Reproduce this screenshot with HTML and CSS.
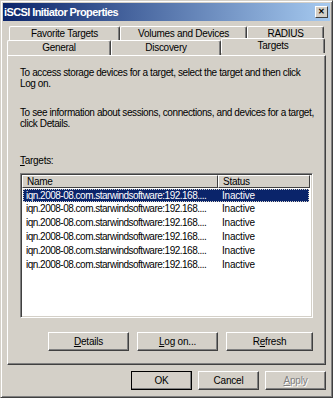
FILE: index.html
```html
<!DOCTYPE html>
<html lang="en">
<head>
  <meta charset="UTF-8">
  <title>iSCSI Initiator Properties</title>
  <link rel="stylesheet" href="styles.css">
</head>
<body>
<div class="window">
  <div class="titlebar">
    <span class="title">iSCSI Initiator Properties</span>
    <span class="close">&#x2715;</span>
  </div>

  <div class="tab-row back">
    <div class="tab" style="width: 111px;">Favorite Targets</div>
    <div class="tab" style="width: 127px;">Volumes and Devices</div>
    <div class="tab" style="width: 77px;">RADIUS</div>
  </div>
  <div class="tab-row front">
    <div class="tab" style="width: 104px;">General</div>
    <div class="tab" style="width: 110px;">Discovery</div>
    <div class="tab active" style="width: 104px;">Targets</div>
  </div>

  <div class="panel">
    <p>To access storage devices for a target, select the target and then click<br>Log on.</p>
    <p>To see information about sessions, connections, and devices for a target,<br>click Details.</p>

    <div class="list-label"><u>T</u>argets:</div>
    <div class="listview">
      <div class="list-head">
        <div class="col-name">Name</div>
        <div class="col-status">Status</div>
      </div>
      <div class="list-row selected">
        <div class="col-name">iqn.2008-08.com.starwindsoftware:192.168....</div>
        <div class="col-status">Inactive</div>
      </div>
      <div class="list-row">
        <div class="col-name">iqn.2008-08.com.starwindsoftware:192.168....</div>
        <div class="col-status">Inactive</div>
      </div>
      <div class="list-row">
        <div class="col-name">iqn.2008-08.com.starwindsoftware:192.168....</div>
        <div class="col-status">Inactive</div>
      </div>
      <div class="list-row">
        <div class="col-name">iqn.2008-08.com.starwindsoftware:192.168....</div>
        <div class="col-status">Inactive</div>
      </div>
      <div class="list-row">
        <div class="col-name">iqn.2008-08.com.starwindsoftware:192.168....</div>
        <div class="col-status">Inactive</div>
      </div>
      <div class="list-row">
        <div class="col-name">iqn.2008-08.com.starwindsoftware:192.168....</div>
        <div class="col-status">Inactive</div>
      </div>
    </div>

    <div class="panel-buttons">
      <button class="btn" style="width: 81px;"><u>D</u>etails</button>
      <button class="btn" style="width: 81px;"><u>L</u>og on...</button>
      <button class="btn" style="width: 87px;">R<u>e</u>fresh</button>
    </div>
  </div>

  <div class="dialog-buttons">
    <button class="btn default">OK</button>
    <button class="btn">Cancel</button>
    <button class="btn disabled"><u>A</u>pply</button>
  </div>
</div>
</body>
</html>
```

FILE: styles.css
```css
body {
    margin: 0;
    font-family: "Liberation Sans", Arial, sans-serif;
    font-size: 10px;
    letter-spacing: -0.28px;
    color: #000;
}
.window {
    width: 333px;
    height: 398px;
    box-sizing: border-box;
    background: #d4d0c8;
    border: 1px solid #404040;
    border-top-color: #d4d0c8;
    border-left-color: #d4d0c8;
    box-shadow: inset 1px 1px 0 #fff, inset -1px -1px 0 #808080;
    padding: 2px;
}
.titlebar {
    height: 18px;
    background: linear-gradient(to right, #0a246a, #a6caf0);
    display: flex;
    align-items: center;
    justify-content: space-between;
    padding: 0 2px 0 1px;
}
.title {
    color: #fff;
    font-weight: bold;
    font-size: 11px;
    letter-spacing: -0.6px;
}
.close {
    width: 11px;
    height: 10px;
    background: #d4d0c8;
    border: 1px solid #404040;
    border-top-color: #fff;
    border-left-color: #fff;
    font-size: 8px;
    font-weight: bold;
    line-height: 10px;
    text-align: center;
    letter-spacing: 0;
}
.tab-row {
    display: flex;
}
.tab-row.back {
    margin-top: 5px;
    padding-left: 6px;
}
.tab-row.front {
    padding-left: 4px;
    position: relative;
    z-index: 1;
}
.tab {
    box-sizing: border-box;
    height: 14px;
    line-height: 13px;
    text-align: center;
    border-top: 1px solid #fff;
    border-left: 1px solid #fff;
    border-right: 1px solid #404040;
    border-radius: 2px 2px 0 0;
    box-shadow: inset -1px 0 0 #808080;
}
.tab-row.front .tab {
    height: 15px;
    line-height: 14px;
}
.tab.active {
    height: 18px;
    margin-top: -2px;
    margin-bottom: -1px;
    line-height: 14px;
    background: #d4d0c8;
}
.panel {
    box-sizing: border-box;
    height: 310px;
    margin: 0 4px;
    border: 1px solid #404040;
    border-top-color: #fff;
    border-left-color: #fff;
    box-shadow: inset -1px -1px 0 #808080;
    padding: 11px 12px 0 12px;
}
.panel p {
    margin: 0 0 18px 0;
    line-height: 11px;
    white-space: nowrap;
    letter-spacing: -0.4px;
}
.list-label {
    margin-top: 26px;
    line-height: 11px;
}
.listview {
    margin-top: 7px;
    height: 145px;
    box-sizing: border-box;
    background: #fff;
    border: 1px solid #808080;
    border-right-color: #fff;
    border-bottom-color: #fff;
    box-shadow: inset 1px 1px 0 #404040, inset -1px -1px 0 #d4d0c8;
    padding: 1px 2px 0 1px;
}
.list-head {
    display: flex;
    height: 13px;
    line-height: 13px;
    background: #d4d0c8;
}
.list-head > div {
    box-sizing: border-box;
    padding-left: 4px;
    border-top: 1px solid #fff;
    border-left: 1px solid #fff;
    border-right: 1px solid #404040;
    border-bottom: 1px solid #404040;
    line-height: 11px;
}
.col-name {
    width: 196px;
}
.col-status {
    flex: 1;
}
.list-row {
    display: flex;
    height: 14px;
    line-height: 14px;
    letter-spacing: -0.5px;
}
.list-row > div {
    padding-left: 4px;
    box-sizing: border-box;
    white-space: nowrap;
    overflow: hidden;
}
.list-row .col-status {
    letter-spacing: -0.2px;
}
.list-row.selected {
    background: #0a246a;
    color: #fff;
    outline: 1px dotted #d4d0c8;
    outline-offset: -1px;
    margin: 1px 1px 0 1px;
    height: 13px;
    line-height: 13px;
}
.list-row.selected .col-name {
    width: 195px;
    padding-left: 3px;
}
.panel-buttons {
    display: flex;
    justify-content: flex-end;
    gap: 8px;
    margin-top: 14px;
}
.btn {
    box-sizing: border-box;
    height: 19px;
    font-family: "Liberation Sans", Arial, sans-serif;
    font-size: 10px;
    letter-spacing: -0.2px;
    background: #d4d0c8;
    border: 1px solid #404040;
    border-top-color: #fff;
    border-left-color: #fff;
    box-shadow: inset -1px -1px 0 #808080;
    padding: 0;
    color: #000;
}
.dialog-buttons {
    display: flex;
    justify-content: flex-end;
    gap: 6px;
    margin-top: 6px;
    padding-right: 4px;
}
.dialog-buttons .btn {
    width: 61px;
}
.btn.default {
    outline: 1px solid #000;
    outline-offset: -1px;
}
.btn.disabled {
    color: #808080;
    text-shadow: 1px 1px 0 #fff;
}
```
